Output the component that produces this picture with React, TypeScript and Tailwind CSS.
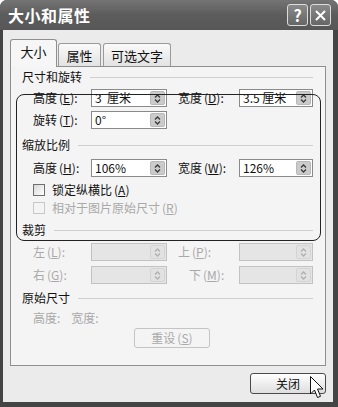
import React from "react"

const font = { fontFamily: '"Noto Sans CJK SC", "Noto Sans", sans-serif' }

const Spin = ({ disabled }: { disabled?: boolean }) => (
  <div
    className={`w-[15px] h-[14px] mr-[1px] rounded-[2px] flex items-center justify-center border ${
      disabled ? "bg-[#e2e2e2] border-[#d4d4d4]" : "bg-[#cbcbcb] border-[#b8b8b8]"
    }`}
  >
    <svg width="9" height="11" viewBox="0 0 9 11">
      <path
        d="M2 4.5 L4.5 2 L7 4.5 M2 6.5 L4.5 9 L7 6.5"
        fill="none"
        stroke={disabled ? "#b0b0b0" : "#3a3a3a"}
        strokeWidth="1.3"
      />
    </svg>
  </div>
)

const Field = ({ value, w, disabled }: { value?: string; w: string; disabled?: boolean }) => (
  <div
    className={`${w} h-[18px] flex items-center border ${
      disabled ? "bg-[#e5e5e5] border-[#c2c2c2]" : "bg-white border-[#8a8a8a]"
    }`}
  >
    <span className="flex-1 pl-[3px] text-[12px] leading-none text-[#111] whitespace-pre">{value}</span>
    <Spin disabled={disabled} />
  </div>
)

const Label = ({ text, k, w, disabled }: { text: string; k: string; w: string; disabled?: boolean }) => (
  <span className={`${w} text-[12px] leading-none ${disabled ? "text-[#a9a9a9]" : "text-[#111]"}`}>
    {text}
    <span className="ml-[2px]">
      (<span className="underline">{k}</span>)
    </span>
    :
  </span>
)

const Header = ({ text, mt }: { text: string; mt: string }) => (
  <div className={`${mt} h-[20px] flex items-center pl-[11px] pr-[12px] gap-[8px]`}>
    <span className="text-[12px] leading-none text-[#111]">{text}</span>
    <div className="flex-1 h-px bg-[#cfcfcf]" />
  </div>
)

export default function App() {
  return (
    <div className="relative w-[338px] h-[407px] flex flex-col bg-[#444444] rounded-t-[7px] overflow-hidden" style={font}>
      {/* title bar */}
      <div className="h-[30px] flex items-center pl-[8px] pr-[7px] bg-gradient-to-b from-[#747474] via-[#5c5c5c] to-[#575757]">
        <span className="text-white font-bold text-[16px] leading-none tracking-[0.5px]">大小和属性</span>
        <div className="ml-auto flex gap-[2px]">
          <div className="w-[21px] h-[22px] rounded-[3px] border border-[#dcdcdc] bg-gradient-to-b from-[#8a8a8a] to-[#666666] flex items-center justify-center text-white font-bold text-[16px] leading-none">
            ?
          </div>
          <div className="w-[21px] h-[22px] rounded-[3px] border border-[#dcdcdc] bg-gradient-to-b from-[#8a8a8a] to-[#666666] flex items-center justify-center">
            <svg width="11" height="11" viewBox="0 0 11 11">
              <path d="M1 1 L10 10 M10 1 L1 10" stroke="white" strokeWidth="2" />
            </svg>
          </div>
        </div>
      </div>

      {/* body */}
      <div className="flex-1 ml-[3px] mr-[5px] mb-[5px] bg-[#ebebeb] flex flex-col px-[7px] pt-[9px]">
        {/* tabs */}
        <div className="h-[27px] flex items-end relative z-10">
          <div className="w-[47px] h-[28px] -mb-px border border-b-0 border-[#8f8f8f] rounded-t-[3px] bg-[#f6f6f6] flex items-start justify-center pt-[3px]">
            <span className="text-[13px] leading-none mt-[2px] text-[#111]">大小</span>
          </div>
          <div className="ml-[1px] w-[43px] h-[23px] border border-b-0 border-[#9a9a9a] rounded-t-[3px] bg-gradient-to-b from-[#fafafa] to-[#e2e2e2] flex items-center justify-center">
            <span className="text-[13px] leading-none text-[#111]">属性</span>
          </div>
          <div className="ml-[2px] w-[68px] h-[23px] border border-b-0 border-[#9a9a9a] rounded-t-[3px] bg-gradient-to-b from-[#fafafa] to-[#e2e2e2] flex items-center justify-center">
            <span className="text-[13px] leading-none text-[#111]">可选文字</span>
          </div>
        </div>

        {/* panel */}
        <div className="w-[316px] h-[300px] border border-[#8f8f8f] bg-[#f4f4f4] flex flex-col">
          <Header text="尺寸和旋转" mt="mt-0" />
          <div className="mt-[2px] h-[18px] flex items-center pl-[22px]">
            <Label text="高度" k="E" w="w-[58px]" />
            <Field value="3  厘米" w="w-[76px]" />
            <span className="w-[11px]" />
            <Label text="宽度" k="D" w="w-[61px]" />
            <Field value="3.5 厘米" w="w-[74px]" />
          </div>
          <div className="mt-[4px] h-[18px] flex items-center pl-[22px]">
            <Label text="旋转" k="T" w="w-[58px]" />
            <Field value="0°" w="w-[76px]" />
          </div>

          <Header text="缩放比例" mt="mt-[6px]" />
          <div className="mt-[4px] h-[18px] flex items-center pl-[22px]">
            <Label text="高度" k="H" w="w-[58px]" />
            <Field value="106%" w="w-[76px]" />
            <span className="w-[11px]" />
            <Label text="宽度" k="W" w="w-[61px]" />
            <Field value="126%" w="w-[74px]" />
          </div>
          <div className="mt-[5px] h-[16px] flex items-center pl-[22px] gap-[7px]">
            <div className="w-[12px] h-[12px] border border-[#6f6f6f] bg-gradient-to-br from-[#d8d8d8] to-white" />
            <span className="text-[12px] leading-none text-[#111]">
              锁定纵横比<span className="ml-[2px]">(<span className="underline">A</span>)</span>
            </span>
          </div>
          <div className="mt-[2px] h-[16px] flex items-center pl-[22px] gap-[7px]">
            <div className="w-[12px] h-[12px] border border-[#c8c8c8] bg-[#f4f4f4]" />
            <span className="text-[12px] leading-none text-[#a9a9a9]">
              相对于图片原始尺寸<span className="ml-[2px]">(<span className="underline">R</span>)</span>
            </span>
          </div>

          <Header text="裁剪" mt="mt-[4px]" />
          <div className="mt-[3px] h-[18px] flex items-center pl-[22px]">
            <Label text="左" k="L" w="w-[58px]" disabled />
            <Field w="w-[76px]" disabled />
            <span className="w-[11px]" />
            <Label text="上" k="P" w="w-[61px]" disabled />
            <Field w="w-[74px]" disabled />
          </div>
          <div className="mt-[5px] h-[18px] flex items-center pl-[22px]">
            <Label text="右" k="G" w="w-[58px]" disabled />
            <Field w="w-[76px]" disabled />
            <span className="w-[22px]" />
            <Label text="下" k="M" w="w-[50px]" disabled />
            <Field w="w-[74px]" disabled />
          </div>

          <Header text="原始尺寸" mt="mt-[4px]" />
          <div className="mt-[2px] h-[16px] flex items-center pl-[22px] gap-[11px] text-[12px] leading-none text-[#a9a9a9]">
            <span>高度:</span>
            <span>宽度:</span>
          </div>
          <div className="mt-[2px] ml-[123px] w-[76px] h-[20px] rounded-[3px] border border-[#c4c4c4] bg-[#f4f4f4] flex items-center justify-center">
            <span className="text-[12px] leading-none text-[#a9a9a9]">
              重设<span className="ml-[2px]">(<span className="underline">S</span>)</span>
            </span>
          </div>
        </div>

        {/* footer */}
        <div className="mt-[7px] flex justify-end">
          <div className="w-[76px] h-[21px] rounded-[3px] border border-[#4a4a4a] bg-gradient-to-b from-white to-[#dedede] flex items-center justify-center">
            <span className="text-[12px] leading-none text-[#111]">关闭</span>
          </div>
        </div>
      </div>

      {/* annotation outline */}
      <div className="absolute left-[16px] top-[94px] w-[305px] h-[147px] border border-[#222] rounded-[8px] pointer-events-none" />

      {/* mouse cursor */}
      <svg className="absolute left-[310px] top-[376px]" width="15" height="23" viewBox="0 0 15 23">
        <path
          d="M0.5 0.5 L0.5 18 L4.5 14 L7.5 21.5 L10.5 20.3 L7.5 13 L13 13 Z"
          fill="white"
          stroke="#111"
          strokeWidth="1"
          strokeLinejoin="round"
        />
      </svg>
    </div>
  )
}
